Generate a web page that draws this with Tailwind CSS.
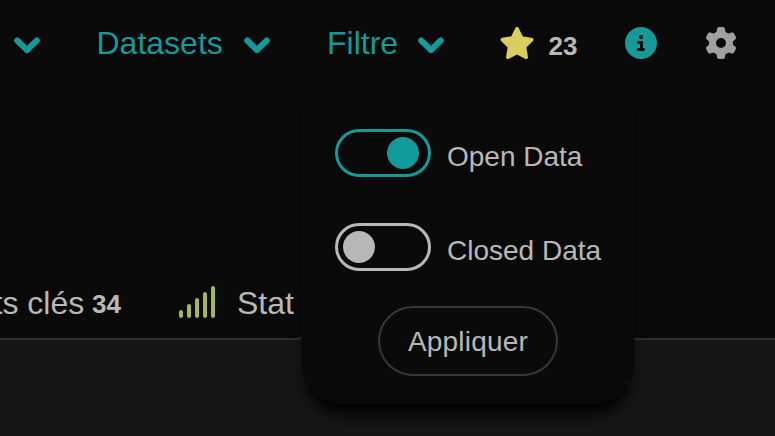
<!DOCTYPE html>
<html lang="fr">
<head>
<meta charset="utf-8">
<title>Filtre</title>
<script src="https://cdn.jsdelivr.net/npm/@tailwindcss/browser@4"></script>
</head>
<body class="bg-[#0a0a0b]">
<div class="relative flex h-[436px] w-[775px] flex-col overflow-hidden bg-[#0a0a0b] font-['Liberation_Sans',Arial,sans-serif] text-[#b8b8b8]">
  <header class="flex h-[86px] shrink-0 items-center pl-[14px] text-[32px] leading-8 text-[#179999]">
    <svg class="mt-[5px] h-[17px] w-[26px] shrink-0" viewBox="0 0 26 17" fill="none" stroke="currentColor" stroke-width="6" stroke-linecap="round" stroke-linejoin="round"><path d="M3.2 3.5 13 13 22.8 3.5"/></svg>
    <span class="ml-[56.5px] w-[147.5px] shrink-0">Datasets</span>
    <svg class="mt-[5px] h-[17px] w-[26px] shrink-0" viewBox="0 0 26 17" fill="none" stroke="currentColor" stroke-width="6" stroke-linecap="round" stroke-linejoin="round"><path d="M3.2 3.5 13 13 22.8 3.5"/></svg>
    <span class="ml-[57px] w-[91px] shrink-0">Filtre</span>
    <svg class="mt-[5px] h-[17px] w-[26px] shrink-0" viewBox="0 0 26 17" fill="none" stroke="currentColor" stroke-width="6" stroke-linecap="round" stroke-linejoin="round"><path d="M3.2 3.5 13 13 22.8 3.5"/></svg>
    <svg class="ml-[54.5px] h-8 w-9 shrink-0 text-[#dccd61]" viewBox="0 0 576 512" fill="currentColor"><path d="M316.9 18C311.6 7 300.4 0 288.1 0s-23.4 7-28.8 18L195 150.3 51.4 171.5c-12 1.8-22 10.2-25.7 21.7s-.7 24.2 7.9 32.7L137.8 329 113.2 474.7c-2 12 3 24.2 12.9 31.3s23 8 33.8 2.3l128.3-68.5 128.3 68.5c10.8 5.7 23.9 4.9 33.8-2.3s14.9-19.3 12.9-31.3L438.5 329 542.7 225.9c8.6-8.5 11.7-21.2 7.9-32.7s-13.7-19.9-25.7-21.7L381.2 150.3 316.9 18z"/></svg>
    <span class="ml-[14px] mt-[5px] w-[76.5px] shrink-0 text-[26px] font-bold text-[#b8b8b8]">23</span>
    <svg class="h-8 w-8 shrink-0" viewBox="0 0 512 512" fill="currentColor"><path d="M256 512A256 256 0 1 0 256 0a256 256 0 1 0 0 512zM216 336h24V272H216c-13.3 0-24-10.7-24-24s10.7-24 24-24h48c13.3 0 24 10.7 24 24v88h8c13.3 0 24 10.7 24 24s-10.7 24-24 24H216c-13.3 0-24-10.7-24-24s10.7-24 24-24zm40-208a32 32 0 1 1 0 64 32 32 0 1 1 0-64z"/></svg>
    <svg class="ml-12 h-8 w-8 shrink-0 text-[#a0a0a0]" viewBox="0 0 512 512" fill="currentColor"><path d="M495.9 166.6c3.2 8.7 .5 18.4-6.4 24.6l-43.3 39.4c1.1 8.3 1.7 16.8 1.7 25.4s-.6 17.1-1.7 25.4l43.3 39.4c6.9 6.2 9.6 15.9 6.4 24.6c-4.4 11.9-9.7 23.3-15.8 34.3l-4.7 8.1c-6.6 11-14 21.4-22.1 31.2c-5.9 7.2-15.7 9.6-24.5 6.8l-55.7-17.7c-13.4 10.3-28.2 18.9-44 25.4l-12.5 57.1c-2 9.1-9 16.3-18.2 17.8c-13.8 2.3-28 3.5-42.5 3.5s-28.7-1.2-42.5-3.5c-9.2-1.5-16.2-8.7-18.2-17.8l-12.5-57.1c-15.8-6.5-30.6-15.1-44-25.4L83.1 425.9c-8.8 2.8-18.6 .3-24.5-6.8c-8.1-9.8-15.5-20.2-22.1-31.2l-4.7-8.1c-6.1-11-11.4-22.4-15.8-34.3c-3.2-8.7-.5-18.4 6.4-24.6l43.3-39.4C64.6 273.1 64 264.6 64 256s.6-17.1 1.7-25.4L22.4 191.2c-6.9-6.2-9.6-15.9-6.4-24.6c4.4-11.9 9.7-23.3 15.8-34.3l4.7-8.1c6.6-11 14-21.4 22.1-31.2c5.9-7.2 15.7-9.6 24.5-6.8l55.7 17.7c13.4-10.3 28.2-18.9 44-25.4l12.5-57.1c2-9.1 9-16.3 18.2-17.8C227.3 1.2 241.5 0 256 0s28.7 1.2 42.5 3.5c9.2 1.5 16.2 8.7 18.2 17.8l12.5 57.1c15.8 6.5 30.6 15.1 44 25.4l55.7-17.7c8.8-2.8 18.6-.3 24.5 6.8c8.1 9.8 15.5 20.2 22.1 31.2l4.7 8.1c6.1 11 11.4 22.4 15.8 34.3zM256 336a80 80 0 1 0 0-160 80 80 0 1 0 0 160z"/></svg>
  </header>

  <nav class="flex h-[254px] shrink-0 items-end bg-[#161616] text-[32px] leading-8">
    <div class="flex h-full w-[304px] shrink-0 items-end rounded-br-lg border-b-2 border-[#303030] bg-[#0a0a0b] pb-[19px]">
      <div class="flex w-[179px] shrink-0 items-end">
        <span class="-ml-[6.5px] w-[98.5px] shrink-0 whitespace-nowrap">ts clés</span>
        <span class="-mb-px text-[26px] font-bold">34</span>
      </div>
      <svg class="mb-[1px] h-8 w-9 shrink-0 text-[#a3b65c]" viewBox="0 0 36 32" fill="none" stroke="currentColor" stroke-width="4" stroke-linecap="round"><path d="M2 26v4M10 20v10M18 14v16M26 8v22M34 2v28"/></svg>
      <span class="ml-[22px] shrink-0">Stat</span>
    </div>
    <div class="h-full grow border-b-2 border-[#303030] bg-[#0a0a0b]"></div>
  </nav>
  <main class="grow bg-[#161616]"></main>

  <section class="absolute left-[302px] top-[86px] flex h-[318px] w-[332px] flex-col rounded-b-[40px] bg-[#0a0a0b] px-[33px] pt-[43px] text-[28px] leading-8 shadow-[0_14px_16px_-5px_#000]">
    <label class="flex h-12 items-center gap-4">
      <span class="flex h-12 w-24 shrink-0 items-center justify-end rounded-full border-3 border-[#179999] pr-[9px]"><span class="h-8 w-8 rounded-full bg-[#129b9b]"></span></span>
      <span class="mt-[7px] whitespace-nowrap">Open Data</span>
    </label>
    <label class="mt-[46px] flex h-12 items-center gap-4">
      <span class="flex h-12 w-24 shrink-0 items-center rounded-full border-3 border-[#b8b8b8] pl-[5px]"><span class="h-8 w-8 rounded-full bg-[#b8b8b8]"></span></span>
      <span class="mt-[7px] whitespace-nowrap">Closed Data</span>
    </label>
    <button class="mt-[35px] flex h-[70px] w-[180px] items-center justify-center self-center rounded-full border-2 border-[#353738] pt-[2px] tracking-[0.2px]">Appliquer</button>
  </section>
</div>
</body>
</html>
